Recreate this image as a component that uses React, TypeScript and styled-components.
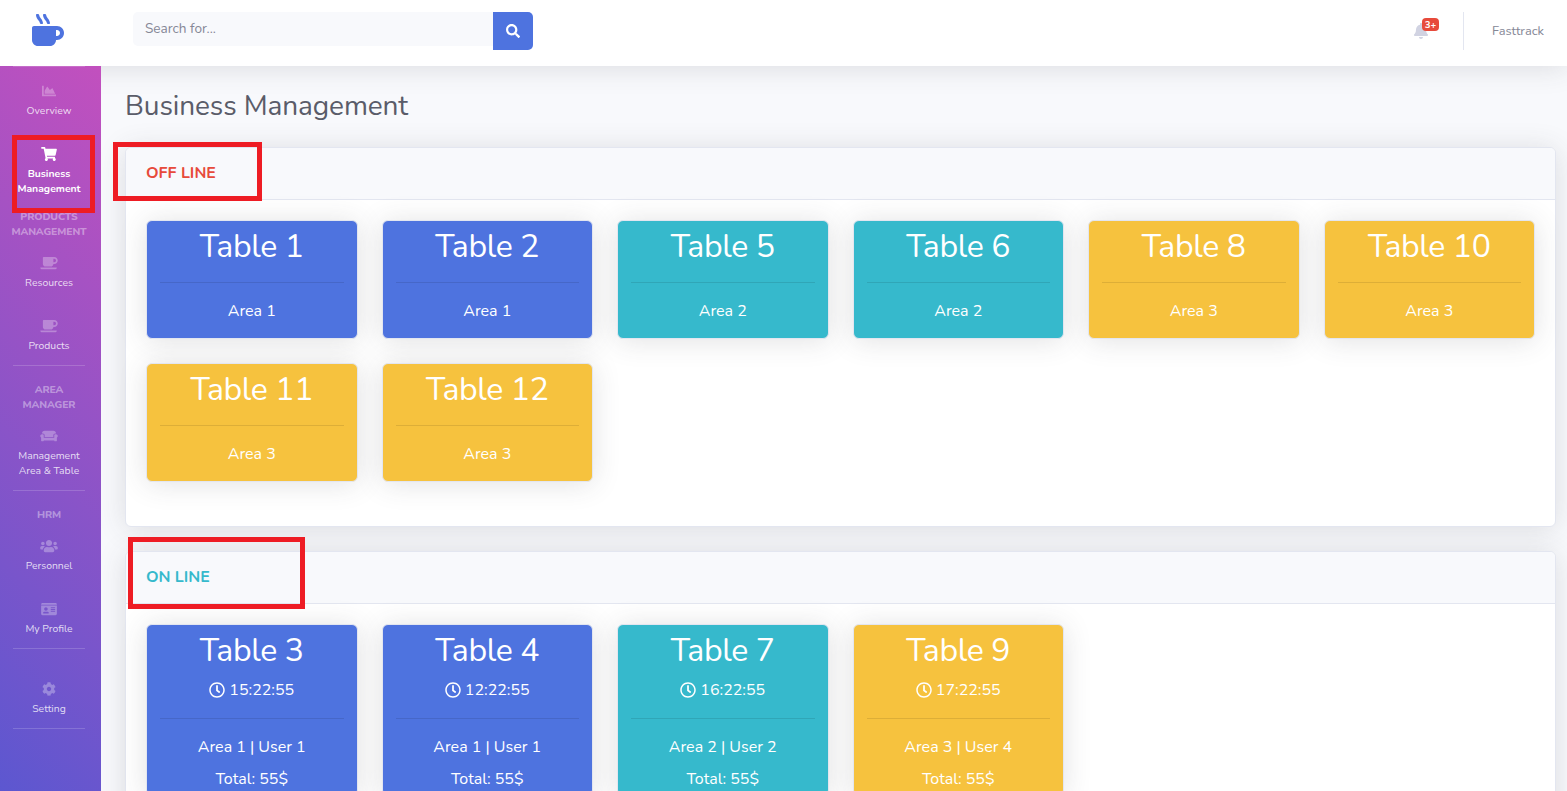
import React from 'react';
import styled, { createGlobalStyle } from 'styled-components';
import {
  FaBell,
  FaChartArea,
  FaCoffee,
  FaCog,
  FaCouch,
  FaIdCard,
  FaMugHot,
  FaRegClock,
  FaSearch,
  FaShoppingCart,
  FaUsers,
} from 'react-icons/fa';

const blue = '#4e73df';
const teal = '#36b9cc';
const yellow = '#f6c23e';
const red = '#e74a3b';

const GlobalStyle = createGlobalStyle`
  *, *::before, *::after { box-sizing: border-box; }
  html, body { margin: 0; height: 100%; overflow: hidden; }
  body { font-family: Nunito, Lato, "Open Sans", sans-serif; font-size: 16px; color: #858796; background: #f8f9fc; }
  h1, h2, h3, p { margin: 0; font-weight: 400; }
  svg { display: block; }
`;

const Page = styled.div`
  position: relative;
  display: flex;
  flex-direction: column;
  height: 791px;
  overflow: hidden;
`;

const Topbar = styled.header`
  display: flex;
  flex: none;
  height: 66px;
  background: #fff;
  box-shadow: 0 2px 28px rgba(58, 59, 69, 0.15);
`;

const Brand = styled.div`
  display: flex;
  width: 133px;
  padding: 14px 0 0 32px;
  color: ${blue};
  font-size: 32px;
`;

const Search = styled.form`
  display: flex;
  align-items: flex-start;
  padding-top: 12px;
`;

const SearchInput = styled.input`
  width: 360px;
  height: 34px;
  padding: 0 12px;
  border: 0;
  border-radius: 5px 0 0 5px;
  background: #f8f9fc;
  font: 13.6px/34px Nunito, Lato, sans-serif;
  &::placeholder { color: #858796; opacity: 1; }
`;

const SearchButton = styled.button`
  display: grid;
  place-items: center;
  width: 40px;
  height: 38px;
  padding: 0;
  border: 0;
  border-radius: 0 5px 5px 0;
  background: ${blue};
  color: #fff;
  font-size: 14px;
`;

const Account = styled.div`
  display: flex;
  margin-left: auto;
  padding: 12px 23px 0 0;
`;

const Alerts = styled.div`
  position: relative;
  width: 50px;
  padding-top: 11px;
  color: #d1d3e2;
  font-size: 16px;
`;

const Badge = styled.span`
  position: absolute;
  left: 9px;
  top: 6px;
  width: 17px;
  height: 13px;
  border-radius: 4px;
  background: ${red};
  color: #fff;
  font-size: 9.6px;
  font-weight: 700;
  line-height: 13px;
  text-align: center;
`;

const UserName = styled.span`
  height: 38px;
  border-left: 1px solid #e3e6f0;
  padding-left: 28px;
  font-size: 12.8px;
  line-height: 38px;
`;

const Body = styled.div`
  display: flex;
  flex: 1;
  min-height: 0;
`;

const Sidebar = styled.nav`
  position: relative;
  flex: none;
  width: 101px;
  padding-right: 3px;
  background: linear-gradient(45deg, #5c57d0 0%, #c250be 100%);
  text-align: center;
  font-size: 10.4px;
  line-height: 15px;
`;

const Divider = styled.hr<{ $gap?: number }>`
  height: 1px;
  margin: 0 13px ${(p) => p.$gap ?? 16}px;
  border: 0;
  background: rgba(255, 255, 255, 0.17);
`;

const NavItem = styled.a<{ $active?: boolean }>`
  display: flex;
  flex-direction: column;
  align-items: center;
  gap: 5px;
  padding: 17px 0 12px;
  color: ${(p) => (p.$active ? '#fff' : 'rgba(255,255,255,0.8)')};
  font-weight: ${(p) => (p.$active ? 700 : 400)};
  white-space: pre-line;

  svg {
    height: 14px;
    width: 18px;
    color: ${(p) => (p.$active ? '#fff' : 'rgba(255,255,255,0.3)')};
  }
`;

const NavHeading = styled.h3<{ $offset?: number }>`
  padding-top: ${(p) => p.$offset ?? 0}px;
  color: rgba(255, 255, 255, 0.4);
  font-size: 10.4px;
  font-weight: 800;
  line-height: 15px;
  letter-spacing: -0.1px;
  white-space: pre-line;
`;

const Content = styled.main`
  flex: 1;
  min-width: 0;
  padding: 20px 11px 0 24px;
`;

const PageTitle = styled.h1`
  height: 38px;
  margin-bottom: 23px;
  color: #5a5c69;
  font-size: 28px;
  line-height: 40px;
  letter-spacing: -0.1px;
`;

const Panel = styled.section<{ $height?: number }>`
  height: ${(p) => (p.$height ? `${p.$height}px` : 'auto')};
  margin-bottom: 24px;
  border: 1px solid #e3e6f0;
  border-radius: 6px;
  background: #fff;
  box-shadow: 0 2px 28px rgba(58, 59, 69, 0.15);
`;

const PanelTitle = styled.h2<{ $color: string }>`
  height: 52px;
  padding-left: 20px;
  border-bottom: 1px solid #e3e6f0;
  border-radius: 5px 5px 0 0;
  background: #f8f9fc;
  color: ${(p) => p.$color};
  font-size: 16px;
  font-weight: 700;
  line-height: 51px;
`;

const TableGrid = styled.div`
  display: grid;
  grid-template-columns: repeat(6, minmax(0, 1fr));
  gap: 24px;
  padding: 20px;
`;

const TableCard = styled.article<{ $color: string }>`
  display: flex;
  flex-direction: column;
  min-height: 119px;
  padding: 0 13px;
  border: 1px solid #e3e6f0;
  border-radius: 6px;
  background: ${(p) => p.$color};
  box-shadow: 0 2px 28px rgba(58, 59, 69, 0.15);
  color: #fff;
  text-align: center;
`;

const TableName = styled.h3`
  height: 45px;
  font-size: 32px;
  line-height: 51px;
  letter-spacing: -0.35px;
`;

const Clock = styled.p`
  display: flex;
  align-items: center;
  justify-content: center;
  gap: 4px;
  height: 32px;
  padding-top: 7px;
  line-height: 24px;
`;

const Rule = styled.hr`
  width: 100%;
  height: 1px;
  margin: 16px 0 12px;
  border: 0;
  background: rgba(0, 0, 0, 0.1);
`;

const Detail = styled.p`
  height: 32px;
  line-height: 32px;
`;

const Highlight = styled.div<{ $x: number; $y: number; $w: number; $h: number }>`
  position: absolute;
  z-index: 2;
  left: ${(p) => p.$x}px;
  top: ${(p) => p.$y}px;
  width: ${(p) => p.$w}px;
  height: ${(p) => p.$h}px;
  border: 5px solid #ee1c24;
  pointer-events: none;
`;

type TableInfo = { id: number; area: number; color: string; time?: string; user?: number };

const offline: TableInfo[] = [
  { id: 1, area: 1, color: blue },
  { id: 2, area: 1, color: blue },
  { id: 5, area: 2, color: teal },
  { id: 6, area: 2, color: teal },
  { id: 8, area: 3, color: yellow },
  { id: 10, area: 3, color: yellow },
  { id: 11, area: 3, color: yellow },
  { id: 12, area: 3, color: yellow },
];

const online: TableInfo[] = [
  { id: 3, area: 1, color: blue, time: '15:22:55', user: 1 },
  { id: 4, area: 1, color: blue, time: '12:22:55', user: 1 },
  { id: 7, area: 2, color: teal, time: '16:22:55', user: 2 },
  { id: 9, area: 3, color: yellow, time: '17:22:55', user: 4 },
];

function Tables({ items }: { items: TableInfo[] }) {
  return (
    <TableGrid>
      {items.map((t) => (
        <TableCard key={t.id} $color={t.color}>
          <TableName>Table {t.id}</TableName>
          {t.time && (
            <Clock>
              <FaRegClock />
              {t.time}
            </Clock>
          )}
          <Rule />
          <Detail>{t.user ? `Area ${t.area} | User ${t.user}` : `Area ${t.area}`}</Detail>
          {t.user && <Detail>Total: 55$</Detail>}
        </TableCard>
      ))}
    </TableGrid>
  );
}

export default function App() {
  return (
    <>
      <GlobalStyle />
      <Page>
        <Topbar>
          <Brand><FaMugHot /></Brand>
          <Search>
            <SearchInput placeholder="Search for..." />
            <SearchButton type="button" aria-label="Search"><FaSearch /></SearchButton>
          </Search>
          <Account>
            <Alerts>
              <FaBell />
              <Badge>3+</Badge>
            </Alerts>
            <UserName>Fasttrack</UserName>
          </Account>
        </Topbar>
        <Body>
          <Sidebar>
            <Divider $gap={0} />
            <NavItem><FaChartArea />Overview</NavItem>
            <NavItem $active><FaShoppingCart />{'Business\nManagement'}</NavItem>
            <NavHeading $offset={1}>{'PRODUCTS\nMANAGEMENT'}</NavHeading>
            <NavItem><FaCoffee />Resources</NavItem>
            <NavItem><FaCoffee />Products</NavItem>
            <Divider />
            <NavHeading>{'AREA\nMANAGER'}</NavHeading>
            <NavItem><FaCouch />{'Management\nArea & Table'}</NavItem>
            <Divider />
            <NavHeading>HRM</NavHeading>
            <NavItem><FaUsers />Personnel</NavItem>
            <NavItem><FaIdCard />My Profile</NavItem>
            <Divider />
            <NavItem><FaCog />Setting</NavItem>
            <Divider />
          </Sidebar>
          <Content>
            <PageTitle>Business Management</PageTitle>
            <Panel $height={380}>
              <PanelTitle $color={red}>OFF LINE</PanelTitle>
              <Tables items={offline} />
            </Panel>
            <Panel>
              <PanelTitle $color={teal}>ON LINE</PanelTitle>
              <Tables items={online} />
            </Panel>
          </Content>
        </Body>
        <Highlight $x={12} $y={135} $w={83} $h={78} />
        <Highlight $x={113} $y={142} $w={149} $h={59} />
        <Highlight $x={128} $y={537} $w={177} $h={72} />
      </Page>
    </>
  );
}
